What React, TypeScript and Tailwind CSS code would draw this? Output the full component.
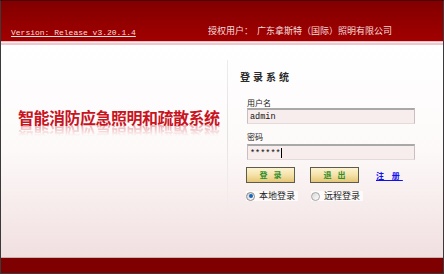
export default function App() {
  return (
    <div className="w-[444px] h-[274px] flex flex-col border border-[#3a3a3a] border-t-[#4a0000] overflow-hidden font-['Noto_Sans_CJK_SC','Noto_Sans',sans-serif]">
      {/* header */}
      <div className="h-[40px] shrink-0 bg-linear-to-b from-[#820000] to-[#a20000] flex items-end pb-[4px] pl-[10px] text-[#f7dcdc]">
        <span className="w-[197px] shrink-0 font-['Liberation_Mono',monospace] text-[8px] leading-[9px] underline">
          Version: Release v3.20.1.4
        </span>
        <span className="mb-[1px] text-[9px] leading-[10px] whitespace-nowrap">
          授权用户：&nbsp;&nbsp;广东拿斯特（国际）照明有限公司
        </span>
      </div>
      {/* pink band */}
      <div className="h-[4px] shrink-0 flex flex-col">
        <div className="h-[1px] bg-[#ecbcc2]" />
        <div className="h-[1px] bg-[#fbeaec]" />
        <div className="h-[2px] bg-[#efc7cc]" />
      </div>
      {/* body */}
      <div className="flex-1 flex flex-row bg-linear-to-b from-white via-[#fdf9f9] to-[#f1dfe0]">
        <div className="w-[226px] shrink-0 flex flex-col pl-[17px] pt-[64px]">
          <div className="text-[16px] leading-[16px] font-bold tracking-[-0.5px] text-[#c8141e] whitespace-nowrap">
            智能消防应急照明和疏散系统
          </div>
          <div aria-hidden="true" className="h-[11px] overflow-hidden [mask-image:linear-gradient(to_bottom,rgba(0,0,0,0.35),transparent)]">
            <div className="text-[16px] leading-[16px] font-bold tracking-[-0.5px] text-[#c8141e] whitespace-nowrap -scale-y-100 -translate-y-[1px]">
              智能消防应急照明和疏散系统
            </div>
          </div>
        </div>
        <div className="w-[1px] shrink-0 mt-[15px] h-[155px] bg-linear-to-b from-[#ececec] via-[#e2e2e2] to-transparent" />
        <div className="flex flex-col pl-[12px] pt-[27px]">
          <div className="text-[10px] leading-[10px] font-bold tracking-[3px] text-[#2a2a2a] whitespace-nowrap">
            登录系统
          </div>
          <div className="ml-[7px] mt-[17px] text-[8px] leading-[8px] text-[#222]">用户名</div>
          <div className="ml-[7px] mt-[1px] w-[168px] h-[16px] bg-[#f8eded] border-t-2 border-t-[#a8a8a8] border-x border-x-[#c8c0c0] border-b border-b-[#e4dada] flex items-center pl-[2px] font-['Liberation_Mono',monospace] text-[8.5px] leading-[10px] text-[#111]">
            admin
          </div>
          <div className="ml-[7px] mt-[9px] text-[8px] leading-[8px] text-[#222]">密码</div>
          <div className="ml-[7px] mt-[3px] w-[168px] h-[16px] bg-[#f8eded] border-t-2 border-t-[#a8a8a8] border-x border-x-[#c8c0c0] border-b border-b-[#e4dada] flex items-center pl-[2px] font-['Liberation_Mono',monospace] text-[8.5px] leading-[10px] text-[#111]">
            <span className="pt-[2px]">******</span>
            <span className="w-[1px] h-[10px] bg-black" />
          </div>
          <div className="ml-[6px] mt-[7px] flex flex-row items-center">
            <div className="w-[49px] h-[16px] border border-[#5c5c4a] bg-linear-to-b from-[#fdf3d2] via-[#f5e2a8] to-[#e6c676] flex items-center justify-center pl-[2px] text-[8px] leading-[8px] font-bold tracking-[2px] text-[#2f8f2f] whitespace-pre">
              登 录
            </div>
            <div className="ml-[15px] w-[49px] h-[16px] border border-[#5c5c4a] bg-linear-to-b from-[#fdf3d2] via-[#f5e2a8] to-[#e6c676] flex items-center justify-center pl-[2px] text-[8px] leading-[8px] font-bold tracking-[2px] text-[#2f8f2f] whitespace-pre">
              退 出
            </div>
            <span className="ml-[17px] text-[8px] leading-[9px] font-bold tracking-[3px] text-[#1010f0] underline whitespace-pre">
              注 册
            </span>
          </div>
          <div className="ml-[6px] mt-[8px] h-[10px] flex flex-row items-center text-[9px] leading-[10px] text-[#222]">
            <div className="flex items-center bg-[#fdfafa] pr-[3px]">
              <span className="w-[9px] h-[9px] rounded-full border border-[#8c8c8c] bg-linear-to-br from-[#cfcfcf] to-white flex items-center justify-center">
                <span className="w-[4px] h-[4px] rounded-full bg-[#1b64b8]" />
              </span>
              <span className="ml-[4px]">本地登录</span>
            </div>
            <div className="ml-[13px] flex items-center bg-[#fdfafa] pr-[3px]">
              <span className="w-[9px] h-[9px] rounded-full border border-[#a4a4a4] bg-linear-to-br from-[#d6d6d6] to-white" />
              <span className="ml-[4px]">远程登录</span>
            </div>
          </div>
        </div>
      </div>
      {/* footer */}
      <div className="h-[1px] shrink-0 bg-[#cfaeb0]" />
      <div className="h-[15px] shrink-0 bg-[#7e0000]" />
    </div>
  );
}
